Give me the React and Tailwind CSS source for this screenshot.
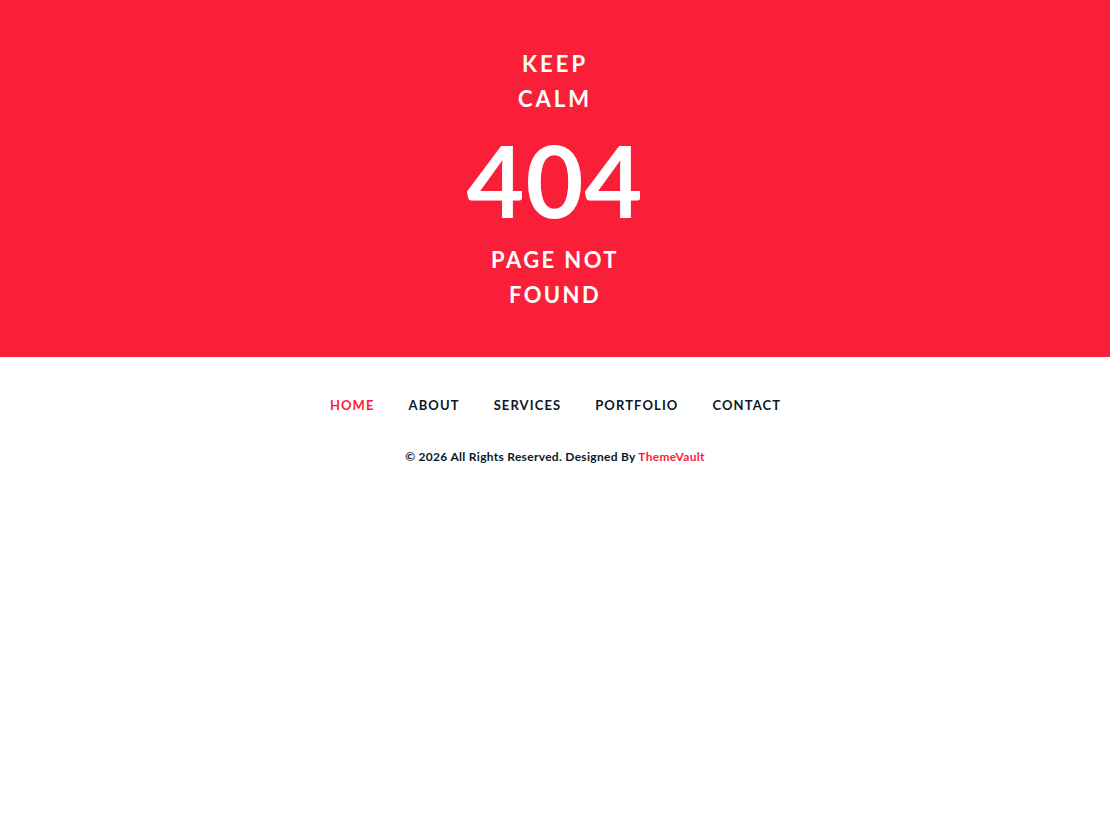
export default function App() {
  const nav = ["HOME", "ABOUT", "SERVICES", "PORTFOLIO", "CONTACT"];
  return (
    <div className="min-h-[830px] bg-white font-['Lato',sans-serif]">
      <section className="h-[357px] bg-[#fa1f39] flex flex-col items-center pt-[46px] text-white">
        <h2 className="text-[22px] font-bold tracking-[3px] leading-[35px] text-center">KEEP<br />CALM</h2>
        <h1 className="mt-[8px] text-[100px] font-bold leading-[110px] tracking-[1px]">404</h1>
        <h3 className="mt-[8px] text-[22px] font-bold tracking-[2.4px] leading-[35px] text-center">PAGE NOT<br />FOUND</h3>
      </section>
      <nav className="flex justify-center gap-[34px] pt-[38px] pl-[1px]">
        {nav.map((n, i) => (
          <a key={n} className={`text-[13px] font-bold tracking-[1.1px] leading-[20px] ${i === 0 ? "text-[#fa1f39]" : "text-[#0b1826]"}`}>{n}</a>
        ))}
      </nav>
      <p className="mt-[33px] text-center text-[12px] font-bold tracking-[0.3px] text-[#0b1826]">
        © 2026 All Rights Reserved. Designed By <span className="text-[#fa1f39]">ThemeVault</span>
      </p>
    </div>
  );
}
